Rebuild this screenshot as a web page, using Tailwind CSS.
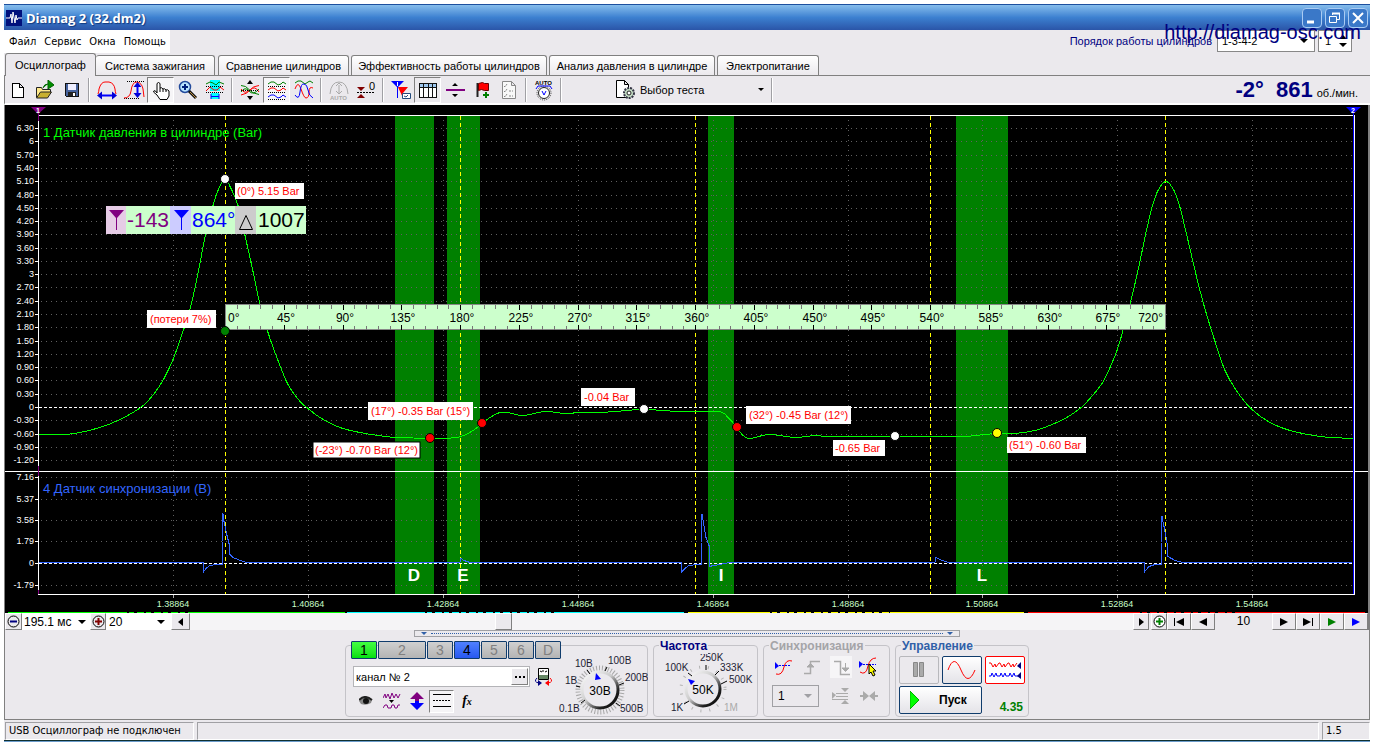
<!DOCTYPE html>
<html lang="ru">
<head>
<meta charset="utf-8">
<title>Diamag 2 (32.dm2)</title>
<script src="https://cdn.jsdelivr.net/npm/@tailwindcss/browser@4"></script>
</head>
<body class="bg-white font-['Liberation_Sans',sans-serif] text-xs leading-4 text-black">
<div class="mx-1 mt-1 flex flex-col bg-[#ebe9ed] relative">

  <!-- Title bar -->
  <header class="flex h-[26px] items-center justify-between border-t border-[#1c4f9e] bg-linear-to-b from-[#86bdec] via-[#3c80d0] to-[#2b55a8] pl-[2px] pr-[2px]">
    <div class="flex items-center gap-1">
      <svg class="size-4" viewBox="0 0 16 16"><rect width="16" height="16" fill="#00107c"/><path d="M0 8h4l1-4 1 9 1-11 2 11 1-8 1 5 1-2h4" fill="none" stroke="#fff"/></svg>
      <h1 class="font-['Open_Sans',sans-serif] text-[13px] font-bold text-white [text-shadow:1px_1px_1px_#123a80]">Diamag 2 (32.dm2)</h1>
    </div>
    <div class="flex gap-[3px]">
      <button aria-label="Свернуть" class="size-5 rounded-sm border border-[#a9cbf3] bg-[#3a78c8]"><svg viewBox="0 0 18 18" class="size-full"><path d="M4 13h7" stroke="#fff" stroke-width="3"/></svg></button>
      <button aria-label="Развернуть" class="size-5 rounded-sm border border-[#a9cbf3] bg-[#3a78c8]"><svg viewBox="0 0 18 18" class="size-full" fill="none" stroke="#fff"><path d="M6.500 6V4.500h7v6H11"/><path d="M6 4.500h8" stroke-width="2"/><path d="M3.500 7.500h7v6h-7z"/></svg></button>
      <button aria-label="Закрыть" class="size-5 rounded-sm border border-[#a9cbf3] bg-[#3a78c8]"><svg viewBox="0 0 18 18" class="size-full"><path d="M4 4l10 10M14 4L4 14" stroke="#fff" stroke-width="2"/></svg></button>
    </div>
  </header>

  <!-- Menu and firing order -->
  <div class="flex h-6 items-start justify-between">
    <nav class="flex h-[23px] w-[166px] items-center gap-2 bg-white pl-[5px] font-['DejaVu_Sans_Condensed','DejaVu_Sans',sans-serif] text-[11px]">
      <a href="#">Файл</a><a href="#">Сервис</a><a href="#">Окна</a><a href="#">Помощь</a>
    </nav>
    <div class="flex items-center pr-[18px]">
      <label for="order" class="mr-[5px] text-[11px] text-[#000080]">Порядок работы цилиндров</label>
      <div class="mr-[3px] flex h-[22px] w-[98px] items-center border border-[#888] bg-white">
        <select id="order" class="h-5 flex-1 appearance-none bg-white pl-1 text-[11px] outline-none"><option>1-3-4-2</option></select>
        <svg class="mr-[6px] h-1 w-2" viewBox="0 0 8 4"><path d="M0 0h8L4 4z"/></svg>
      </div>
      <div class="flex h-[22px] w-[34px] items-center border border-[#888] bg-white">
        <input aria-label="Номер цилиндра" value="1" class="w-5 pl-[6px] text-[11px] outline-none">
        <svg class="h-3 w-2" viewBox="0 0 8 12"><path d="M0 4h8L4 0zM0 8h8l-4 4z"/></svg>
      </div>
    </div>
  </div>
  <a href="#" class="absolute right-[9px] top-[16px] text-xl leading-6 text-[#000080]">http://diamag-osc.com</a>

  <!-- Tabs -->
  <div role="tablist" class="flex h-[22px] items-end border-b border-[#808080] pl-px text-[11px]">
    <button role="tab" aria-selected="true" class="relative top-px h-[23px] w-[91px] rounded-t-[3px] border border-b-0 border-[#808080] bg-[#ebe9ed] whitespace-nowrap">Осциллограф</button>
    <button role="tab" class="mr-[3px] h-5 w-[119px] rounded-t-[3px] border border-b-0 border-l-0 border-[#808080] bg-linear-to-b from-white to-[#ebe9ed] whitespace-nowrap">Система зажигания</button>
    <button role="tab" class="mr-[2px] h-5 w-[131px] rounded-t-[3px] border border-b-0 border-[#808080] bg-linear-to-b from-white to-[#ebe9ed] whitespace-nowrap">Сравнение цилиндров</button>
    <button role="tab" class="mr-[2px] h-5 w-[196px] rounded-t-[3px] border border-b-0 border-[#808080] bg-linear-to-b from-white to-[#ebe9ed] whitespace-nowrap">Эффективность работы цилиндров</button>
    <button role="tab" class="mr-[2px] h-5 w-[166px] rounded-t-[3px] border border-b-0 border-[#808080] bg-linear-to-b from-white to-[#ebe9ed] whitespace-nowrap">Анализ давления в цилиндре</button>
    <button role="tab" class="h-5 w-[102px] rounded-t-[3px] border border-b-0 border-[#808080] bg-linear-to-b from-white to-[#ebe9ed] whitespace-nowrap">Электропитание</button>
  </div>

  <!-- Toolbar -->
  <div class="flex h-[29px] items-center justify-between border-b-2 border-l border-b-white border-l-[#808080] pr-3 [&_svg]:shrink-0">
    <div class="flex items-center">
      <button aria-label="Новый" class="flex h-[26px] w-[26px] items-center justify-center"><svg width="20" height="20" viewBox="0 0 20 20" shape-rendering="crispEdges"><path d="M4.500 3.500h7l4 4v10h-11zM11.500 3.500v4h4" fill="#fff" stroke="#000"/></svg></button>
      <button aria-label="Открыть" class="flex h-[26px] w-[27px] items-center justify-center"><svg width="20" height="20" viewBox="0 0 20 20"><path d="M1.500 17.500v-10h5l1 2h8v3" fill="#ffe98a" stroke="#222"/><path d="M1.500 18l4-6h11l-4 6z" fill="#c8b030" stroke="#222"/><path d="M8 8q1-4 5-4M13 0l6 5-6 4z" fill="#009000" stroke="#006000"/></svg></button>
      <button aria-label="Сохранить" class="flex h-[26px] w-[27px] items-center justify-center"><svg width="20" height="20" viewBox="0 0 20 20" shape-rendering="crispEdges"><path d="M3.500 3.500h13v13h-12l-1-1z" fill="#46629c" stroke="#111"/><path d="M6 4h8v6H6z" fill="#eef"/><path d="M6 12h8v4H6z" fill="#222"/><path d="M11 13h2v3h-2z" fill="#fff"/></svg></button>
      <span class="mx-[3px] h-6 w-[2px] border-l border-[#a0a0a4] bg-white"></span>
      <button aria-label="Один цикл" class="flex h-[26px] w-[27px] items-center justify-center"><svg width="20" height="20" viewBox="0 0 20 20" fill="none"><path d="M1 14q1-3 1-5Q4 2 8 2h4q5 1 6 7 0 2 1 5" stroke="#f00"/><path d="M3 15.500h14" stroke="#00f" stroke-width="2"/><path d="M0 15.500l5-4v8zM20 15.500l-5-4v8z" fill="#0000d8"/></svg></button>
      <button aria-label="Амплитуда" class="flex h-[26px] w-[27px] items-center justify-center"><svg width="22" height="20" viewBox="0 0 22 20" fill="none"><path d="M4 1.500h17M1 18.500h16" stroke="#000" stroke-dasharray="1 1"/><path d="M1 18q6 0 7-7Q9 2 14 2q5 1 6 7l1 8" stroke="#f00"/><path d="M14.500 5v11" stroke="#00f" stroke-width="2"/><path d="M14.500 2l-4 5h8zM14.500 18l-4-5h8z" fill="#0000d8"/></svg></button>
      <button aria-label="Рука" class="flex h-[26px] w-[27px] items-center justify-center border border-[#808080] border-b-white border-r-white bg-[#f6f5f7]"><svg width="20" height="20" viewBox="0 0 20 20"><path d="M6 13V3.500q1.500-2 3 0V8q1.500-1 3 1 1.500-1 3 1 1.500-1 3 1v5l-2 3.500H9L6 15l-3.500-3q0-2 2-1z" fill="#fff" stroke="#000"/><path d="M9 8v4M12 9v3M15 10v2" stroke="#000"/></svg></button>
      <button aria-label="Лупа" class="flex h-[26px] w-[27px] items-center justify-center"><svg width="20" height="20" viewBox="0 0 20 20"><circle cx="7" cy="7" r="5.500" fill="#b8e4ff" stroke="#234a9c" stroke-width="1.500"/><path d="M4 7h6M7 4v6" stroke="#00207c" stroke-width="2"/><path d="M11 11l7 7" stroke="#111" stroke-width="3"/><path d="M12 12l6 6" stroke="#c09040"/></svg></button>
      <button aria-label="Интервал" class="flex h-[26px] w-[27px] items-center justify-center"><svg width="20" height="20" viewBox="0 0 20 20" fill="none"><path d="M5 0h10v11H5zM6 13h8v6H6z" fill="#0ff"/><path d="M1 4l4-2 3 1 3 2 3-3 5 2" stroke="#008000"/><path d="M1 11l4-4 4 3 3 0 3-3 4 3" stroke="#f00"/><path d="M1 6.500h18M1 12.500h18" stroke="#000" stroke-dasharray="1 1"/><path d="M6 16.500h8M6 14v5M14 14v5" stroke="#00f"/></svg></button>
      <span class="mx-[3px] h-6 w-[2px] border-l border-[#a0a0a4] bg-white"></span>
      <button aria-label="Наложить" class="flex h-[26px] w-[27px] items-center justify-center"><svg width="20" height="20" viewBox="0 0 20 20" fill="none"><path d="M1 5.500q5 0 8 4t10 5" stroke="#008000"/><path d="M1 15q6-1 9-5t9-4.500" stroke="#f00"/><path d="M1 12q4-6 8-1t10-2" stroke="#008000"/><path d="M1 9q4 6 9 1t9 2" stroke="#f00"/><path d="M1 10.500h18" stroke="#000" stroke-dasharray="1 1"/><path d="M7 4l3-4 3 4zM7 16l3 4 3-4z" fill="#000"/></svg></button>
      <button aria-label="Раздельно" class="flex h-[26px] w-[27px] items-center justify-center border border-[#808080] border-b-white border-r-white bg-[#f6f5f7]"><svg width="20" height="20" viewBox="0 0 20 20" fill="none"><path d="M1 4l3-2 3 0 4 3 3-1 2-2 3 2" stroke="#008000"/><path d="M1 10l3-2 3 0 4 3 3-1 2-2 3 2" stroke="#f00"/><path d="M1 17l3-2 3 0 4 3 3-1 2-2 3 2" stroke="#00f"/><path d="M1 6.500h18M1 12.500h18M1 19.500h18" stroke="#000" stroke-dasharray="1 1"/></svg></button>
      <button aria-label="Вместе" class="flex h-[26px] w-[27px] items-center justify-center"><svg width="20" height="20" viewBox="0 0 20 20" fill="none"><path d="M1 3l3-2 3 0 4 3 3-2 2-1 3 2" stroke="#008000"/><path d="M1 9q3-9 6 0t5 9q3 0 3-6t4-4" stroke="#f00"/><path d="M1 15q4 6 5-3t4-8q3 0 4 6t5 8" stroke="#00f"/></svg></button>
      <span class="mx-[3px] h-6 w-[2px] border-l border-[#a0a0a4] bg-white"></span>
      <button aria-label="Авто" disabled class="flex h-[26px] w-[27px] items-center justify-center"><svg width="20" height="20" viewBox="0 0 20 20" fill="none" stroke="#aaa"><path d="M1 14q1-12 9-12t9 12M10 5v8"/><path d="M7 6l3-3 3 3M7 11l3 3 3-3"/><text x="1" y="20" font-size="6" font-weight="bold" fill="#aaa" stroke="none">AUTO</text></svg></button>
      <button aria-label="Ноль" class="flex h-[26px] w-[27px] items-center justify-center"><svg width="20" height="20" viewBox="0 0 20 20"><path d="M1 7h8l-4 4zM1 18h8l-4-4z" fill="#800000"/><path d="M1 12.500h18" stroke="#000" stroke-dasharray="2 1"/><text x="13" y="10" font-size="11">0</text></svg></button>
      <span class="mx-[3px] h-6 w-[2px] border-l border-[#a0a0a4] bg-white"></span>
      <button aria-label="Маркеры" class="flex h-[26px] w-[27px] items-center justify-center"><svg width="20" height="20" viewBox="0 0 20 20"><path d="M7 7h10l-5 6v5z" fill="#f00"/><path d="M0 1h13L7 7v11H6V7z" fill="#00f"/><path d="M6.500 2v4" stroke="#fff"/><path d="M11.500 13.500h8v5h-8z" fill="#fff" stroke="#234a7c"/><path d="M13 16l2 1 2-2" fill="none" stroke="#234a7c"/></svg></button>
      <button aria-label="Таблица" class="flex h-[26px] w-[27px] items-center justify-center border border-[#808080] border-b-white border-r-white"><svg width="20" height="18" viewBox="0 0 20 18" shape-rendering="crispEdges"><path d="M1.500 2.500h17v14h-17z" fill="#fff" stroke="#111"/><path d="M2 3h16v3H2z" fill="#9fc8f0"/><path d="M1 6.500h18M5.500 3v13M10.500 3v13M14.500 3v13" stroke="#111"/></svg></button>
      <button aria-label="Разделитель" class="flex h-[26px] w-[27px] items-center justify-center"><svg width="20" height="20" viewBox="0 0 20 20"><path d="M1 10h19" stroke="#800080" stroke-width="2"/><path d="M7 6l3-3 3 3zM7 14l3 3 3-3z"/></svg></button>
      <button aria-label="Добавить метку" class="flex h-[26px] w-[27px] items-center justify-center"><svg width="20" height="20" viewBox="0 0 20 20"><path d="M5.500 3v14" stroke="#222" stroke-width="2"/><path d="M6.500 3.500l4-1 2 1h4v7h-4l-3-1-3 1z" fill="#f00" stroke="#600"/><path d="M11 15h6M14 12v6" stroke="#008000" stroke-width="2"/></svg></button>
      <button aria-label="Отчёт" class="flex h-[26px] w-[27px] items-center justify-center"><svg width="20" height="20" viewBox="0 0 20 20" fill="none" stroke="#888"><path d="M3.500 1.500h9l4 4v13h-13zM12.500 1.500v4h4" fill="#f8f8f8"/><path d="M5 6l1 1 2-3M5 11l1 1 2-3M5 16l1 1 2-3M10 11h4M10 16h4" stroke-dasharray="2 1"/></svg></button>
      <span class="mx-[3px] h-6 w-[2px] border-l border-[#a0a0a4] bg-white"></span>
      <button aria-label="Авто вольтметр" class="flex h-[26px] w-[27px] items-center justify-center"><svg width="20" height="22" viewBox="0 0 20 22"><text x="1" y="6" font-size="6" font-weight="bold">AUTO</text><circle cx="10" cy="14" r="5.500" fill="#fff" stroke="#222"/><circle cx="10" cy="14" r="7" fill="none" stroke="#444" stroke-dasharray="1 1"/><path d="M8 12l2 4 2-4M2 10l2-3h12l2 3" fill="none" stroke="#00f"/></svg></button>
      <span class="mx-[3px] h-6 w-[2px] border-l border-[#a0a0a4] bg-white"></span>
      <button class="ml-[50px] flex h-[26px] w-[153px] items-center">
        <svg class="mr-1" width="21" height="22" viewBox="0 0 21 22"><path d="M1.500 1.500h8l4 4v13h-12zM9.500 1.500v4h4" fill="#fff" stroke="#000"/><circle cx="14" cy="14" r="5" fill="#c4dcc4" stroke="#334" stroke-width="2" stroke-dasharray="2 1"/><circle cx="14" cy="14" r="2" fill="#fff" stroke="#222"/></svg>
        <span class="flex-1 text-left text-[11px]">Выбор теста</span>
        <svg class="mr-1" width="6" height="3" viewBox="0 0 6 3"><path d="M0 0h6L3 3z"/></svg>
      </button>
      <span class="mx-[3px] h-6 w-[2px] border-l border-[#a0a0a4] bg-white"></span>
    </div>
    <div class="flex items-baseline text-[#000080]">
      <strong class="mr-3 text-[22px] leading-6">-2°</strong><strong class="mr-1 text-[22px] leading-6">861</strong><span class="text-black text-[11px]">об./мин.</span>
    </div>
  </div>

  <!-- Oscillogram -->
  <div class="border-l border-r-2 border-[#808080] bg-black">
    <svg class="block h-auto w-full" viewBox="5 105 1363 508" font-family="Liberation Sans, sans-serif">
      <rect x="5" y="105" width="1363" height="508" fill="#000"/>
      <g fill="#008000"><path d="M395 116h39v478h-39zM447 116h33v478h-33zM708 116h26v478h-26zM956 116h52v478h-52z"/></g>
      <g id="grid" stroke="#606060" stroke-dasharray="1 4" shape-rendering="crispEdges"></g>
      <g stroke="#fff" shape-rendering="crispEdges">
        <path d="M38 115.500h1316M38.500 115v480M38 594.500h1317M5 471.500h1363M1354.500 115v480" fill="none"/>
        <path d="M39 407.500h1314M39 563.500h1314" stroke-dasharray="3 2"/>
      </g>
      <g stroke="#ff0" stroke-dasharray="4 3" shape-rendering="crispEdges"><path d="M225.500 116v478M460.500 116v478M695.500 116v478M930.500 116v478M1165.500 116v478"/></g>
      <path d="M38.500 107v14M38.500 466v10M38.500 590v4" stroke="#800080"/><path d="M1353.500 107v487" stroke="#00f"/>
      <path d="M31 107h15l-8 7z" fill="#800080"/><path d="M1346 107h15l-8 7z" fill="#00f"/>
      <text x="36" y="113" font-size="7" font-weight="bold" fill="#fff">1</text><text x="1351" y="113" font-size="7" font-weight="bold" fill="#fff">2</text>
      <g id="axes" fill="#fff" stroke="none" font-size="9"></g>
      <path id="pressure" fill="none" stroke="#0f0" shape-rendering="crispEdges"/>
      <path shape-rendering="crispEdges" d="M39 562.500H203v10l3-4 4-3 7-1h5v-23l1-28 1 8 3 14 2 8v10l4 4 5 2 8 3H460l1-4 3 2 6 2H681v10l4-4 4-3 8-1h4v-22l1-28 2 11 2 12 3 8v21l5-1 16-3H935l1-5 4 2 8 3h196v10l5-6 6-2h6v-22l1-26 2 10 3 16 1 14 7 4 8 2h169" fill="none" stroke="#36f"/>
      <text x="43" y="137" font-size="13" fill="#0f0">1 Датчик давления в цилиндре (Bar)</text>
      <text x="43" y="493" font-size="13" fill="#36f">4 Датчик синхронизации (В)</text>
      <g font-size="17" font-weight="bold" fill="#fff" text-anchor="middle"><text x="414" y="581">D</text><text x="463" y="581">E</text><text x="721" y="581">I</text><text x="982" y="581">L</text></g>

      <rect x="225.500" y="304.500" width="940" height="25" fill="#cfc" stroke="#888"/>
      <g id="ruler" font-size="12"></g>

      <g fill="#fff">
        <rect x="235" y="183" width="69" height="16"/><rect x="147" y="310" width="69" height="18"/>
        <rect x="368" y="402" width="105" height="18"/><rect x="313" y="442" width="107" height="16" stroke="#000"/>
        <rect x="581" y="388" width="54" height="18"/><rect x="746" y="406" width="105" height="18"/>
        <rect x="833" y="440" width="52" height="16"/><rect x="1007" y="437" width="79" height="16"/>
      </g>
      <g font-size="11" fill="#f00">
        <text x="237" y="195">(0°) 5.15 Bar</text><text x="150" y="323">(потери 7%)</text>
        <text x="371" y="415">(17°) -0.35 Bar (15°)</text><text x="315" y="454">(-23°) -0.70 Bar (12°)</text>
        <text x="584" y="401">-0.04 Bar</text><text x="749" y="419">(32°) -0.45 Bar (12°)</text>
        <text x="835" y="452">-0.65 Bar</text><text x="1009" y="449">(51°) -0.60 Bar</text>
      </g>
      <g stroke="#000">
        <g fill="#fff"><circle cx="225" cy="179" r="4.500"/><circle cx="644" cy="409" r="4.500"/><circle cx="895" cy="436" r="4.500"/></g>
        <g fill="#f00"><circle cx="430" cy="438" r="4.500"/><circle cx="482" cy="423" r="4.500"/><circle cx="737" cy="427" r="4.500"/></g>
        <circle cx="225" cy="331" r="4.500" fill="#008000"/><circle cx="997" cy="433" r="4.500" fill="#ff0"/>
      </g>

      <rect x="106" y="206" width="200" height="28" fill="#cfc"/>
      <rect x="106" y="206" width="20" height="28" fill="#e6cce6"/><rect x="170" y="206" width="21" height="28" fill="#ccf"/><rect x="235" y="206" width="21" height="28" fill="#ccc"/>
      <path d="M109 210h15l-7 8v12h-1v-12z" fill="#800080"/><path d="M174 210h15l-7 8v12h-1v-12z" fill="#00f"/><path d="M246 215.500l-6.500 14h13z" fill="none" stroke="#000"/>
      <g font-size="21"><text x="127" y="227" fill="#800080">-143</text><text x="192" y="227" fill="#00f">864°</text><text x="258" y="227">1007</text></g>

      <g shape-rendering="crispEdges"><path d="M8 612.500h337" stroke="#0f0"/><path d="M347 612.500h337" stroke="#0ff"/><path d="M688 612.500h336" stroke="#ff0"/><path d="M1028 612.500h337" stroke="#f00"/><path d="M127 612.500h66M425 612.500h130M770 612.500h120M1140 612.500h100" stroke="#000" stroke-dasharray="2 5 3 7"/></g>
    </svg>
  </div>

  <!-- Scroll and playback row -->
  <div class="flex h-[17px] items-stretch border-l border-r-2 border-[#808080] text-xs [&_button]:flex [&_button]:items-center [&_button]:justify-center [&_button]:border [&_button]:border-white [&_button]:border-b-[#808080] [&_button]:border-r-[#808080] [&_button]:bg-[#ebe9ed]">
    <button aria-label="Сжать" class="w-[17px]"><svg width="13" height="13" viewBox="0 0 13 13"><circle cx="6.500" cy="6.500" r="5.500" fill="none" stroke="#000"/><path d="M3 6.500h7" stroke="#000080" stroke-width="2"/></svg></button>
    <div class="flex w-[68px] items-center bg-white"><select aria-label="Длительность" class="h-4 flex-1 appearance-none pl-[2px]"><option>195.1 мс</option></select><svg class="mr-1" width="8" height="4" viewBox="0 0 8 4"><path d="M0 0h8L4 4z"/></svg></div>
    <button aria-label="Растянуть" class="w-4"><svg width="13" height="13" viewBox="0 0 13 13"><circle cx="6.500" cy="6.500" r="5.500" fill="none" stroke="#000"/><path d="M3 6.500h7M6.500 3v7" stroke="#800000" stroke-width="2"/></svg></button>
    <div class="flex w-[65px] items-center bg-white"><select aria-label="Масштаб" class="h-4 flex-1 appearance-none pl-[3px]"><option>20</option></select><svg class="mr-[6px]" width="8" height="4" viewBox="0 0 8 4"><path d="M0 0h8L4 4z"/></svg></div>
    <button aria-label="Влево" class="w-[19px]"><svg width="5" height="8" viewBox="0 0 5 8"><path d="M5 0v8L0 4z"/></svg></button>
    <div class="flex flex-1 bg-[#f5f4f6]"><span class="w-[32.300%]"></span><button aria-label="Ползунок" class="w-[17px]"></button></div>
    <button aria-label="Вправо" class="w-4"><svg width="5" height="8" viewBox="0 0 5 8"><path d="M0 0v8l5-4z"/></svg></button>
    <button aria-label="Добавить" class="ml-[2px] w-4"><svg width="13" height="13" viewBox="0 0 13 13"><circle cx="6.500" cy="6.500" r="5.500" fill="#fff" stroke="#000"/><path d="M3 6.500h7M6.500 3v7" stroke="#008000" stroke-width="2"/></svg></button>
    <button aria-label="В начало" class="w-6"><svg width="10" height="8" viewBox="0 0 10 8"><path d="M0 0h1v8H0zM10 0v8L2 4z"/></svg></button>
    <button aria-label="Назад" class="w-6"><svg width="8" height="8" viewBox="0 0 8 8"><path d="M8 0v8L0 4z"/></svg></button>
    <span class="w-[57px] text-center leading-[17px]">10</span>
    <button aria-label="Вперёд" class="w-6"><svg width="8" height="8" viewBox="0 0 8 8"><path d="M0 0v8l8-4z"/></svg></button>
    <button aria-label="В конец" class="w-6"><svg width="10" height="8" viewBox="0 0 10 8"><path d="M0 0v8l8-4zM9 0h1v8H9z"/></svg></button>
    <button aria-label="Воспроизвести" class="w-6"><svg width="8" height="8" viewBox="0 0 8 8"><path d="M0 0v8l8-4z" fill="#008000"/></svg></button>
    <button aria-label="Воспроизвести всё" class="w-6"><svg width="8" height="8" viewBox="0 0 8 8"><path d="M0 0v8l8-4z" fill="#00f"/></svg></button>
  </div>

  <!-- Control panels -->
  <div class="border-x border-b border-[#808080] pb-[2px]">
    <div class="mx-auto flex h-[7px] w-[546px] items-center gap-1 border border-[#a0a0a4] px-[6px]">
      <svg width="6" height="3" viewBox="0 0 6 3"><path d="M0 0h6L3 3z" fill="#3060a8"/></svg><span class="flex-1 border-t border-dotted border-[#3060a8]"></span><svg width="6" height="3" viewBox="0 0 6 3"><path d="M0 0h6L3 3z" fill="#3060a8"/></svg>
    </div>
    <div class="flex justify-center gap-[5px] pt-1">
      <!-- Channel -->
      <section class="relative mt-1 flex h-[72px] w-[303px] rounded-sm border border-[#c4c3c8]">
        <div class="-mt-[5px] ml-[5px] w-[213px]">
          <div class="flex gap-px text-sm leading-4 text-[#808080] [&_button]:h-[18px] [&_button]:border [&_button]:border-[#103c6c] [&_button]:rounded-[1px]">
            <button class="w-[26px] bg-linear-to-b from-[#40ff40] to-[#00e010] text-black">1</button>
            <button class="w-12 bg-linear-to-b from-[#d0d0d0] to-[#b4b4b4]">2</button>
            <button class="w-[26px] bg-linear-to-b from-[#d0d0d0] to-[#b4b4b4]">3</button>
            <button class="w-[26px] bg-linear-to-b from-[#5080ff] to-[#2858f0] text-black">4</button>
            <button class="w-[26px] bg-linear-to-b from-[#d0d0d0] to-[#b4b4b4]">5</button>
            <button class="w-[26px] bg-linear-to-b from-[#d0d0d0] to-[#b4b4b4]">6</button>
            <button class="w-[26px] bg-linear-to-b from-[#d0d0d0] to-[#b4b4b4]">D</button>
          </div>
          <div class="mt-[7px] flex items-center gap-1 pl-[2px]">
            <div class="flex h-[21px] w-[177px] items-center border border-[#b4b4b8] bg-white pr-px">
              <input aria-label="Название канала" value="канал № 2" class="w-full min-w-0 flex-1 pl-[2px] text-[11px] outline-none">
              <button aria-label="Выбрать" class="h-[17px] w-[17px] border border-white border-b-[#808080] border-r-[#808080] bg-[#ebe9ed]"><svg viewBox="0 0 15 15"><path d="M3 7h2v2H3zM7 7h2v2H7zM11 7h2v2h-2z"/></svg></button>
            </div>
            <button aria-label="Прибор"><svg width="19" height="20" viewBox="0 0 19 20"><path d="M4.500 1.500h10v11h-10z" fill="#fff" stroke="#000"/><path d="M5 8h9v4H5z" fill="#686"/><path d="M6 4l2 1M9 3v2M13 4l-2 1" stroke="#000"/><path d="M3 11q-4 4 2 5" fill="none" stroke="#000080"/><path d="M4 13v6l4-3z" fill="#000080"/><path d="M16 11q4 4-2 5" fill="none" stroke="#f00"/><path d="M15 13v6l-4-3z" fill="#f00"/></svg></button>
          </div>
          <div class="mt-[2px] flex h-6 items-center pl-[2px]">
            <button aria-label="Показать" class="flex w-[26px] justify-center"><svg width="14" height="10" viewBox="0 0 14 10"><path d="M0 5q5-6 13-1l-1 3q-5 3-10 1z" fill="#888"/><path d="M0 4q6-6 13 0" fill="none" stroke="#222" stroke-width="2"/><circle cx="7" cy="5" r="3" fill="#111"/></svg></button>
            <button aria-label="Фильтр" class="flex w-[26px] justify-center"><svg width="18" height="18" viewBox="0 0 18 18"><path d="M0 6l2-4 1 4 2-4 2 5 2-6 2 5 2-4 2 4 2-4M0 16l2-3h2l1 3h3l1-3h2l1 3h2l1-3h2" fill="none" stroke="#800080"/><path d="M6 8h5l-2.500 3z"/></svg></button>
            <button aria-label="Инверсия" class="flex w-[23px] justify-center"><svg width="16" height="18" viewBox="0 0 16 18"><path d="M8 0l7 7h-5v2H6V7H1z" fill="#800080"/><path d="M8 18l7-7h-5V9H6v2H1z" fill="#00f"/></svg></button>
            <button aria-label="Уровни" class="ml-px flex h-[23px] w-[25px] items-center justify-center border border-[#808080] border-b-white border-r-white bg-[#f5f4f6]"><svg width="18" height="14" viewBox="0 0 18 14" shape-rendering="crispEdges"><path d="M0 .5h18M0 12.500h18" stroke="#000"/><path d="M0 6.500h18" stroke="#000" stroke-dasharray="2 1"/></svg></button>
            <button class="w-[26px] text-center font-['Liberation_Serif',serif] text-sm font-bold italic">f<span class="text-[10px]">x</span></button>
          </div>
        </div>
        <svg class="absolute left-[210px] top-[8px]" width="92" height="62" viewBox="556 654 92 62" font-size="10" fill="#223">
          <circle cx="600" cy="690" r="22" fill="none" stroke="#a8a8a8" stroke-width="5" stroke-dasharray="1 2"/>
          <circle cx="600" cy="690" r="18" fill="#ebe9ed" stroke="url(#rim)" stroke-width="3"/>
          <path d="M581 703l4-3M576 686l4 1M587 670l3 4M607 667l-2 4M624 683l-5 2M620 706l-4-3" stroke="#000"/>
          <path d="M595 680l1-7 5 6z" fill="#00f"/>
          <text x="575" y="667">10В</text><text x="608" y="664">100В</text><text x="565" y="684">1В</text><text x="625" y="681">200В</text><text x="559" y="712">0.1В</text><text x="620" y="712">500В</text>
          <text x="600" y="695" text-anchor="middle" font-size="12" fill="#000">30В</text>
        </svg>
      </section>
      <!-- Frequency -->
      <fieldset class="relative mt-1 h-[72px] w-[105px] rounded-sm border border-[#c4c3c8]">
        <h2 class="absolute left-[5px] -top-2 bg-[#ebe9ed] px-px font-bold text-[#000080]">Частота</h2>
        <svg class="mt-[6px] block" width="103" height="62" viewBox="655 652 103 62" font-size="10" fill="#223">
          <defs><linearGradient id="rim" x1="0" y1="0" x2="1" y2="1"><stop offset="0" stop-color="#fff"/><stop offset=".45" stop-color="#ccc"/><stop offset=".75" stop-color="#222"/><stop offset="1" stop-color="#000"/></linearGradient></defs>
          <circle cx="704" cy="689" r="22" fill="none" stroke="#b4b4b4" stroke-width="3" stroke-dasharray="1 8"/>
          <circle cx="704" cy="689" r="17" fill="#ebe9ed" stroke="url(#rim)" stroke-width="3"/>
          <path d="M685 704l5-3M689 673l4 3M707 665v5M720 671l-4 4M728 681l-6 3" stroke="#000"/>
          <path d="M689 679l7 2-4 4z" fill="#00f"/>
          <text x="666" y="671">100K</text><text x="701" y="661">250K</text><text x="721" y="671">333K</text><text x="730" y="683">500K</text><text x="672" y="711">1K</text><text x="725" y="711" fill="#aaa">1M</text>
          <text x="704" y="694" text-anchor="middle" font-size="12" fill="#000">50K</text>
        </svg>
      </fieldset>
      <!-- Sync -->
      <fieldset class="relative mt-1 h-[72px] w-[125px] rounded-sm border border-[#c4c3c8] px-[8px] pt-[10px]">
        <h2 class="absolute left-[5px] -top-2 bg-[#ebe9ed] px-px font-bold text-[#a4a4a8]">Синхронизация</h2>
        <div class="flex h-[22px] gap-[7px]">
          <button aria-label="По уровню" class="w-[22px]"><svg width="22" height="20" viewBox="0 0 22 20" fill="none"><path d="M4 17q6 2 8-7 2-8 8-6" stroke="#f00"/><path d="M4 8.500h14" stroke="#00f" stroke-dasharray="2 1"/><path d="M3 5v7l4-3z" fill="#00f"/></svg></button>
          <button aria-label="Фронт" class="w-[22px]"><svg width="22" height="20" viewBox="0 0 22 20" fill="none" stroke="#aaa"><path d="M3 16.500h6.500v-12H19" stroke-width="1.500"/><path d="M9.500 7v6M6 10l3.500-3.500L13 10z" fill="#aaa"/></svg></button>
          <button aria-label="Спад" class="w-[22px] bg-[#f6f5f7]"><svg width="22" height="20" viewBox="0 0 22 20" fill="none" stroke="#aaa"><path d="M4 4.500h6.500v13H20" stroke-width="1.500"/><path d="M15.500 6v8M12 11l3.500 3.500L19 11z" fill="#aaa"/></svg></button>
          <button aria-label="Вручную" class="w-[22px]"><svg width="22" height="20" viewBox="0 0 22 20" fill="none"><path d="M1 15q6 4 8-6 2-8 8-8" stroke="#f00"/><path d="M1 7.500h16" stroke="#00f" stroke-dasharray="2 1"/><path d="M0 4v7l4-4z" fill="#00f"/><path d="M10 7l7 7-3 0 2 4-2 1-2-4-2 2z" fill="#ff0" stroke="#000"/></svg></button>
        </div>
        <div class="mt-[7px] flex items-center gap-[12px]">
          <div class="flex h-[22px] w-[47px] items-center border border-[#a0a0a4]"><select aria-label="Канал синхронизации" class="flex-1 appearance-none pl-[5px]"><option>1</option></select><svg class="mr-[6px]" width="8" height="4" viewBox="0 0 8 4"><path d="M0 0h8L4 4z" fill="#a0a0a4"/></svg></div>
          <svg width="20" height="18" viewBox="0 0 20 18" fill="#aaa"><path d="M1 5v7l4-4zM10 1h8l-4 4zM10 17h8l-4-4z"/><path d="M5 6h12v1H5zM5 9h12v1H5zM1 12h16v1H1z"/></svg>
          <svg class="-ml-1" width="20" height="18" viewBox="0 0 20 18" fill="#aaa"><path d="M4 4l6 5-6 5v-4H1V8h3zM16 4l-6 5 6 5v-4h3V8h-3z"/></svg>
        </div>
      </fieldset>
      <!-- Run control -->
      <fieldset class="relative mt-1 h-[72px] w-[134px] rounded-sm border border-[#c4c3c8] px-[3px] pt-[10px]">
        <h2 class="absolute left-[5px] -top-2 bg-[#ebe9ed] px-px font-bold text-[#3060a8]">Управление</h2>
        <div class="flex gap-[3px]">
          <button aria-label="Пауза" class="flex h-7 w-10 items-center justify-center rounded-[2px] border border-[#b8b8bc]"><svg width="12" height="16" viewBox="0 0 12 16" fill="#aaa" stroke="#888"><path d="M.5.500h4v14h-4zM6.500.500h4v14h-4z"/></svg></button>
          <button aria-label="Однократно" class="flex h-7 w-10 items-center justify-center rounded-[2px] border border-[#103c6c] bg-linear-to-b from-white to-[#e4e3e8]"><svg width="30" height="20" viewBox="0 0 30 20" fill="none" stroke="#f00"><path d="M1 10q6-17 13 0t14 0"/></svg></button>
          <button aria-label="Непрерывно" class="flex h-7 w-10 items-center justify-center rounded-[2px] border border-[#f00] bg-white"><svg width="34" height="20" viewBox="0 0 34 20" fill="none"><path d="M1 3h2l2 4 2-3 1 3 3-4h1l2 4 2-3 1 3 3-4h1l2 4 2-3 1 3 3-4" stroke="#f00"/><path d="M1 16h2l1-3 2 4 2-4 1 3h3l1-3 2 4 2-4 1 3h3l1-3 2 4 2-4 1 3h3" stroke="#00f"/><path d="M33 2v7l-4-3zM33 12v7l-4-3z" fill="#000080"/></svg></button>
        </div>
        <div class="mt-[2px] flex items-end justify-between pr-[2px]">
          <button class="flex h-7 w-[83px] items-center rounded-[2px] border border-[#103c6c] bg-linear-to-b from-white to-[#e4e3e8] pl-[10px] font-bold"><svg class="mr-5" width="9" height="18" viewBox="0 0 9 18"><path d="M0 0v18l9-9z" fill="#0f0" stroke="#0a0"/></svg>Пуск</button>
          <output class="font-bold text-[#008000] leading-[14px]">4.35</output>
        </div>
      </fieldset>
    </div>
  </div>

  <!-- Status bar -->
  <footer class="mt-[2px] flex h-[18px] gap-[3px] pl-px text-[11px] leading-4 [&>span]:border [&>span]:border-[#a0a0a4] [&>span]:border-b-white [&>span]:border-r-white [&>span]:pl-[3px] font-['DejaVu_Sans_Condensed','DejaVu_Sans',sans-serif]">
    <span class="w-[189px] whitespace-nowrap">USB Осциллограф не подключен</span><span class="flex-1"></span><span class="w-12">1.5</span>
  </footer>
  <div class="h-[3px] border-t border-[#103030] bg-[#6c9ccc]"></div>
</div>

<script>
const ns = 'http://www.w3.org/2000/svg';
function add(parent, tag, attrs, text) {
  const el = document.createElementNS(ns, tag);
  for (const k in attrs) el.setAttribute(k, attrs[k]);
  if (text) el.textContent = text;
  parent.appendChild(el);
}
const grid = document.getElementById('grid');
const axes = document.getElementById('axes');
const ruler = document.getElementById('ruler');

function yMark(y, label) {
  add(grid, 'path', { d: `M41 ${y + 0.5}H1353` });
  add(axes, 'rect', { x: 35, y: y, width: 4, height: 1 });
  add(axes, 'text', { x: 34, y: y + 3, 'text-anchor': 'end' }, label);
}
for (let i = -4; i <= 21; i++) {
  const v = i * 0.3;
  yMark(Math.round(407 - i * 13.28), i % 10 === 0 ? String(Math.round(v)) : v.toFixed(2).replace('6.00', '6').replace('3.00', '3'));
}
[[477, '7.16'], [499, '5.37'], [520, '3.58'], [541, '1.79'], [563, '0'], [585, '-1.79']].forEach(m => yMark(m[0], m[1]));
for (let k = 0; k < 9; k++) {
  const x = Math.round(173 + k * 134.9);
  add(grid, 'path', { d: `M${x + 0.5} 120V594` });
  add(axes, 'rect', { x: x, y: 595, width: 1, height: 3, fill: '#aaa' });
  add(axes, 'text', { x: x, y: 607, 'text-anchor': 'middle', fill: '#c8ffc8' }, (1.38864 + k * 0.02).toFixed(5));
}
// Degree ruler: 720 degrees, minor tick every 9, major every 45
for (let n = 1; n < 80; n++) {
  const x = Math.round(225 + n * 11.75) + 0.5, major = n % 5 === 0, h = major ? 5 : 4;
  add(ruler, 'path', { d: `M${x} 305v${h}M${x} 330v-${h}`, stroke: major ? '#000' : '#777' });
}
for (let d = 0; d <= 720; d += 45) {
  const a = d === 0 ? 'start' : d === 720 ? 'end' : 'middle';
  const x = d === 0 ? 228 : d === 720 ? 1163 : Math.round(227 + d * 940 / 720);
  add(ruler, 'text', { x: x, y: 322, 'text-anchor': a }, d + '°');
}
// Cylinder pressure trace, smoothed with Catmull-Rom segments on pixel centres
const p = [[39,434],[55,434],[75,433],[100,427],[120,419],[142,406],[155,392],[164,378],[173,359],[184,328],[190,309],[197,278],[205,237],[213,205],[218,190],[225,179],[232,190],[238,205],[245,235],[253,271],[260,304],[268,332],[278,360],[288,384],[300,401],[308,408],[320,417],[340,427],[360,432],[385,436],[400,437],[430,438],[445,438],[461,436],[473,430],[482,423],[490,417],[500,412],[508,412],[523,415],[545,411],[565,413],[580,412],[600,412],[615,411],[644,409],[680,411],[718,411],[728,417],[737,427],[742,434],[748,438],[755,437],[770,434],[795,437],[815,435],[830,436],[895,436],[960,436],[975,435],[997,433],[1015,433],[1035,430],[1052,424],[1065,418],[1080,408],[1090,398],[1102,383],[1110,367],[1117,350],[1123,330],[1130,304],[1138,270],[1146,232],[1152,207],[1158,190],[1166,181],[1174,190],[1180,207],[1188,240],[1196,274],[1204,305],[1215,341],[1225,370],[1237,391],[1252,409],[1270,422],[1290,430],[1320,436],[1353,438]].map(q => [q[0], q[1] + 0.5]);
let d = `M${p[0]}`;
for (let i = 0; i < p.length - 1; i++) {
  const a = p[i - 1] || p[i], b = p[i], c = p[i + 1], e = p[i + 2] || c;
  d += `C${b[0] + (c[0] - a[0]) / 6} ${b[1] + (c[1] - a[1]) / 6} ${c[0] - (e[0] - b[0]) / 6} ${c[1] - (e[1] - b[1]) / 6} ${c[0]} ${c[1]}`;
}
document.getElementById('pressure').setAttribute('d', d);
</script>
</body>
</html>
